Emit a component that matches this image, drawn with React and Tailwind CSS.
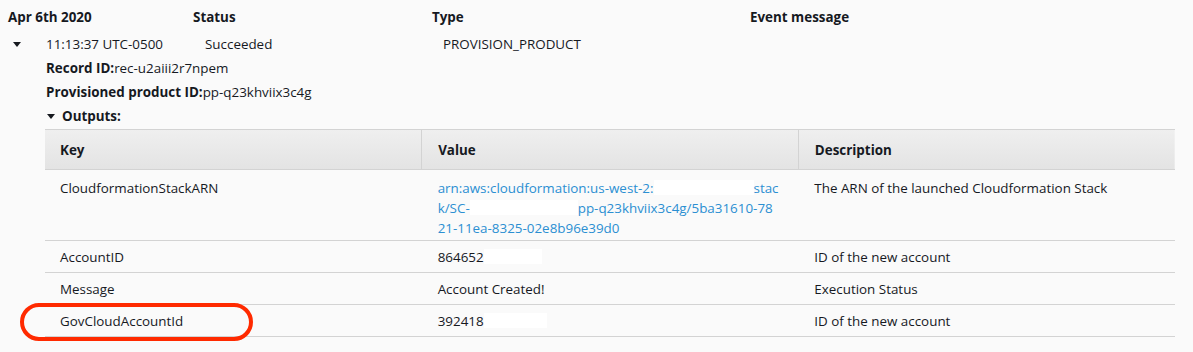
import React from "react";

const font = { fontFamily: '"Open Sans", "Noto Sans", sans-serif' };

function Caret({ className = "" }) {
  return (
    <svg width="8" height="5" viewBox="0 0 8 5" className={className} aria-hidden="true">
      <path d="M0 0h8L4 5z" fill="#16191f" />
    </svg>
  );
}

function Redact({ w }) {
  return <span className={`inline-block h-[15px] bg-white align-[-2px] ${w}`} />;
}

const rows = [
  {
    key: "AccountID",
    value: (
      <>
        864652
        <Redact w="w-[58px]" />
      </>
    ),
    desc: "ID of the new account",
  },
  { key: "Message", value: "Account Created!", desc: "Execution Status" },
  {
    key: "GovCloudAccountId",
    value: (
      <>
        392418
        <Redact w="w-[63px]" />
      </>
    ),
    desc: "ID of the new account",
  },
];

export default function App() {
  return (
    <div className="relative h-[352px] w-[1193px] overflow-hidden bg-[#fafafa] text-[13.4px] text-[#16191f]" style={font}>
      <div className="flex pt-[7px] font-bold leading-[20px]">
        <div className="w-[193px] pl-[8px]">Apr 6th 2020</div>
        <div className="w-[239px]">Status</div>
        <div className="w-[318px]">Type</div>
        <div>Event message</div>
      </div>

      <div className="flex items-center pt-[7px] leading-[20px]">
        <div className="flex w-[46px] justify-start pl-[13px]">
          <Caret />
        </div>
        <div className="w-[159px]">11:13:37 UTC-0500</div>
        <div className="w-[238px]">Succeeded</div>
        <div>PROVISION_PRODUCT</div>
      </div>

      <div className="pl-[46px] pt-[4px] leading-[20px]">
        <span className="font-bold">Record ID:</span>rec-u2aiii2r7npem
      </div>
      <div className="pl-[46px] pt-[4px] leading-[20px]">
        <span className="font-bold">Provisioned product ID:</span>pp-q23khviix3c4g
      </div>
      <div className="flex items-center gap-[7px] pl-[47px] pt-[4px] font-bold leading-[20px]">
        <Caret />
        <span>Outputs:</span>
      </div>

      <div className="ml-[45px] mt-[3px] w-[1130px]">
        <table className="w-full table-fixed border-collapse leading-[20px]">
          <thead>
            <tr className="bg-gradient-to-b from-[#efefef] to-[#e3e3e3] font-bold">
              <th className="h-[40px] border-y border-[#d3d3d3] pl-[15px] text-left">Key</th>
              <th className="border-y border-l border-[#d3d3d3] pl-[16px] text-left">Value</th>
              <th className="border-y border-l border-[#d3d3d3] pl-[16px] text-left">Description</th>
            </tr>
          </thead>
          <tbody>
            <tr className="border-b border-[#d3d3d3] align-top">
              <td className="pb-[10px] pl-[15px] pt-[8px]">CloudformationStackARN</td>
              <td className="pb-[2px] pl-[16px] pt-[8px] text-[#2b8fd2]">
                <div className="whitespace-nowrap">
                  arn:aws:cloudformation:us-west-2:
                  <Redact w="w-[100px]" />
                  stac
                </div>
                <div className="whitespace-nowrap">
                  k/SC-
                  <Redact w="w-[108px]" />
                  pp-q23khviix3c4g/5ba31610-78
                </div>
                <div>21-11ea-8325-02e8b96e39d0</div>
              </td>
              <td className="pl-[16px] pt-[8px]">The ARN of the launched Cloudformation Stack</td>
            </tr>
            {rows.map((r) => (
              <tr key={r.key} className="h-[32px] border-b border-[#d3d3d3]">
                <td className="pl-[15px]">{r.key}</td>
                <td className="pl-[16px]">{r.value}</td>
                <td className="pl-[16px]">{r.desc}</td>
              </tr>
            ))}
          </tbody>
        </table>
      </div>

      <div className="absolute left-[20px] top-[303px] h-[38px] w-[233px] rounded-[20px] border-[4px] border-[#ff2a00]" />
    </div>
  );
}
